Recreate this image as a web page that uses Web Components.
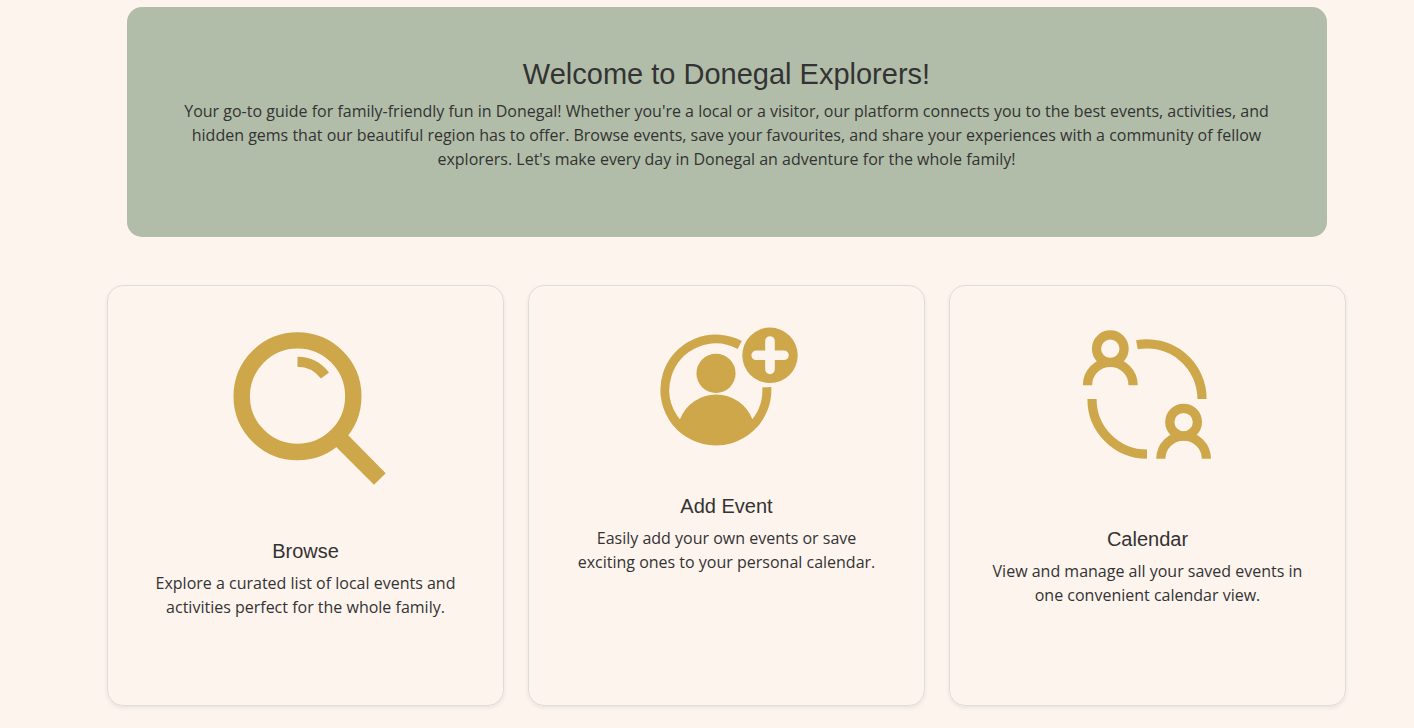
<!DOCTYPE html>
<html lang="en">
<head>
<meta charset="utf-8">
<meta name="viewport" content="width=device-width, initial-scale=1">
<title>Donegal Explorers</title>
<style>
  :root {
    --page: #fef4ee;
    --sage: #b1bda8;
    --gold: #cda74a;
    --heading-font: "Liberation Sans", Arial, sans-serif;
  }
  body {
    margin: 0;
    background: var(--page);
    color: #333;
    font: 16px/24px "Open Sans", sans-serif;
  }
</style>
</head>
<body>
<home-page></home-page>

<template id="home-page">
  <style>
    :host { display: block; }
    main { padding: 7px 68px 22px 107px; }
  </style>
  <main>
    <welcome-banner>
      <span slot="title">Welcome to Donegal Explorers!</span>
      Your go-to guide for family-friendly fun in Donegal! Whether you're a local or a visitor, our platform connects you to the best events, activities, and hidden gems that our beautiful region has to offer. Browse events, save your favourites, and share your experiences with a community of fellow explorers. Let's make every day in Donegal an adventure for the whole family!
    </welcome-banner>
    <feature-grid>
      <feature-card>
        <svg slot="icon" width="200" height="197" viewBox="206 326 200 197" fill="none" stroke="#cda74a" aria-hidden="true">
          <circle cx="297.5" cy="396.2" r="55.8" stroke-width="16.4"/>
          <path d="M297.5 361.7A34.5 34.5 0 0 1 325 375.6" stroke-width="10"/>
          <path d="M348 435L385.7 473.3L374 484.8L336 446.7Z" fill="#cda74a" stroke="none"/>
        </svg>
        <span slot="title">Browse</span>
        Explore a curated list of local events and activities perfect for the whole family.
      </feature-card>
      <feature-card>
        <svg slot="icon" width="200" height="152" viewBox="627 326 200 152" fill="none" stroke="#cda74a" aria-hidden="true">
          <path d="M739.7 344.9A51 51 0 1 0 766.8 387.2" stroke-width="9"/>
          <g fill="#cda74a" stroke="none">
            <circle cx="716" cy="373.3" r="19.6"/>
            <path d="M680 419.3A38.8 38.8 0 0 1 752.4 419.3L757 421A51 51 0 0 1 675 421Z"/>
            <circle cx="770" cy="355.3" r="27.7"/>
          </g>
          <path d="M756.2 355.3H784M770 341V369.4" stroke="#fef4ee" stroke-width="9.6" stroke-linecap="round"/>
        </svg>
        <span slot="title">Add Event</span>
        Easily add your own events or save exciting ones to your personal calendar.
      </feature-card>
      <feature-card>
        <svg slot="icon" width="200" height="185" viewBox="1048 326 200 185" fill="none" stroke="#cda74a" stroke-width="9.2" aria-hidden="true">
          <circle cx="1110.3" cy="348.7" r="13.8"/>
          <path d="M1087.5 385.2A22.8 22.8 0 0 1 1133.1 385.2"/>
          <circle cx="1183.6" cy="422.1" r="13.8"/>
          <path d="M1160.8 458.8A22.8 22.8 0 0 1 1206.4 458.8"/>
          <path d="M1136.9 344.8A55 55 0 0 1 1202 399"/>
          <path d="M1092 399A55 55 0 0 0 1147 454.2"/>
        </svg>
        <span slot="title">Calendar</span>
        View and manage all your saved events in one convenient calendar view.
      </feature-card>
    </feature-grid>
  </main>
</template>

<template id="welcome-banner">
  <style>
    :host { display: block; }
    section {
      box-sizing: border-box;
      max-width: 1200px;
      margin: 0 auto 48px;
      padding: 50px;
      border-radius: 15px;
      background: var(--sage);
      text-align: center;
    }
    h1 { margin: 0 0 8px; font: 400 29px/34px var(--heading-font); }
    p { margin: 0 0 16px; }
  </style>
  <section>
    <h1><slot name="title"></slot></h1>
    <p><slot></slot></p>
  </section>
</template>

<template id="feature-grid">
  <style>
    :host {
      display: grid;
      grid-template-columns: repeat(auto-fit, minmax(300px, 1fr));
      gap: 24px;
    }
  </style>
  <slot></slot>
</template>

<template id="feature-card">
  <style>
    :host { display: block; }
    article {
      box-sizing: border-box;
      height: 100%;
      min-height: 421px;
      padding: 40px;
      border: 1px solid #dcdcdc;
      border-radius: 16px;
      box-shadow: 0 2px 4px rgba(0, 0, 0, .075);
      text-align: center;
    }
    ::slotted(svg) { display: block; max-width: 100%; margin: 0 auto 16px; }
    h2 { margin: 0 0 8px; font: 400 20px/24px var(--heading-font); }
    p { margin: 0; }
  </style>
  <article>
    <slot name="icon"></slot>
    <h2><slot name="title"></slot></h2>
    <p><slot></slot></p>
  </article>
</template>

<script>
  class TemplateElement extends HTMLElement {
    constructor() {
      super();
      const template = document.getElementById(this.localName);
      this.attachShadow({ mode: "open" }).append(template.content.cloneNode(true));
    }
  }

  customElements.define("welcome-banner", class WelcomeBanner extends TemplateElement {});
  customElements.define("feature-grid", class FeatureGrid extends TemplateElement {});
  customElements.define("feature-card", class FeatureCard extends TemplateElement {});
  customElements.define("home-page", class HomePage extends TemplateElement {});
</script>
</body>
</html>
